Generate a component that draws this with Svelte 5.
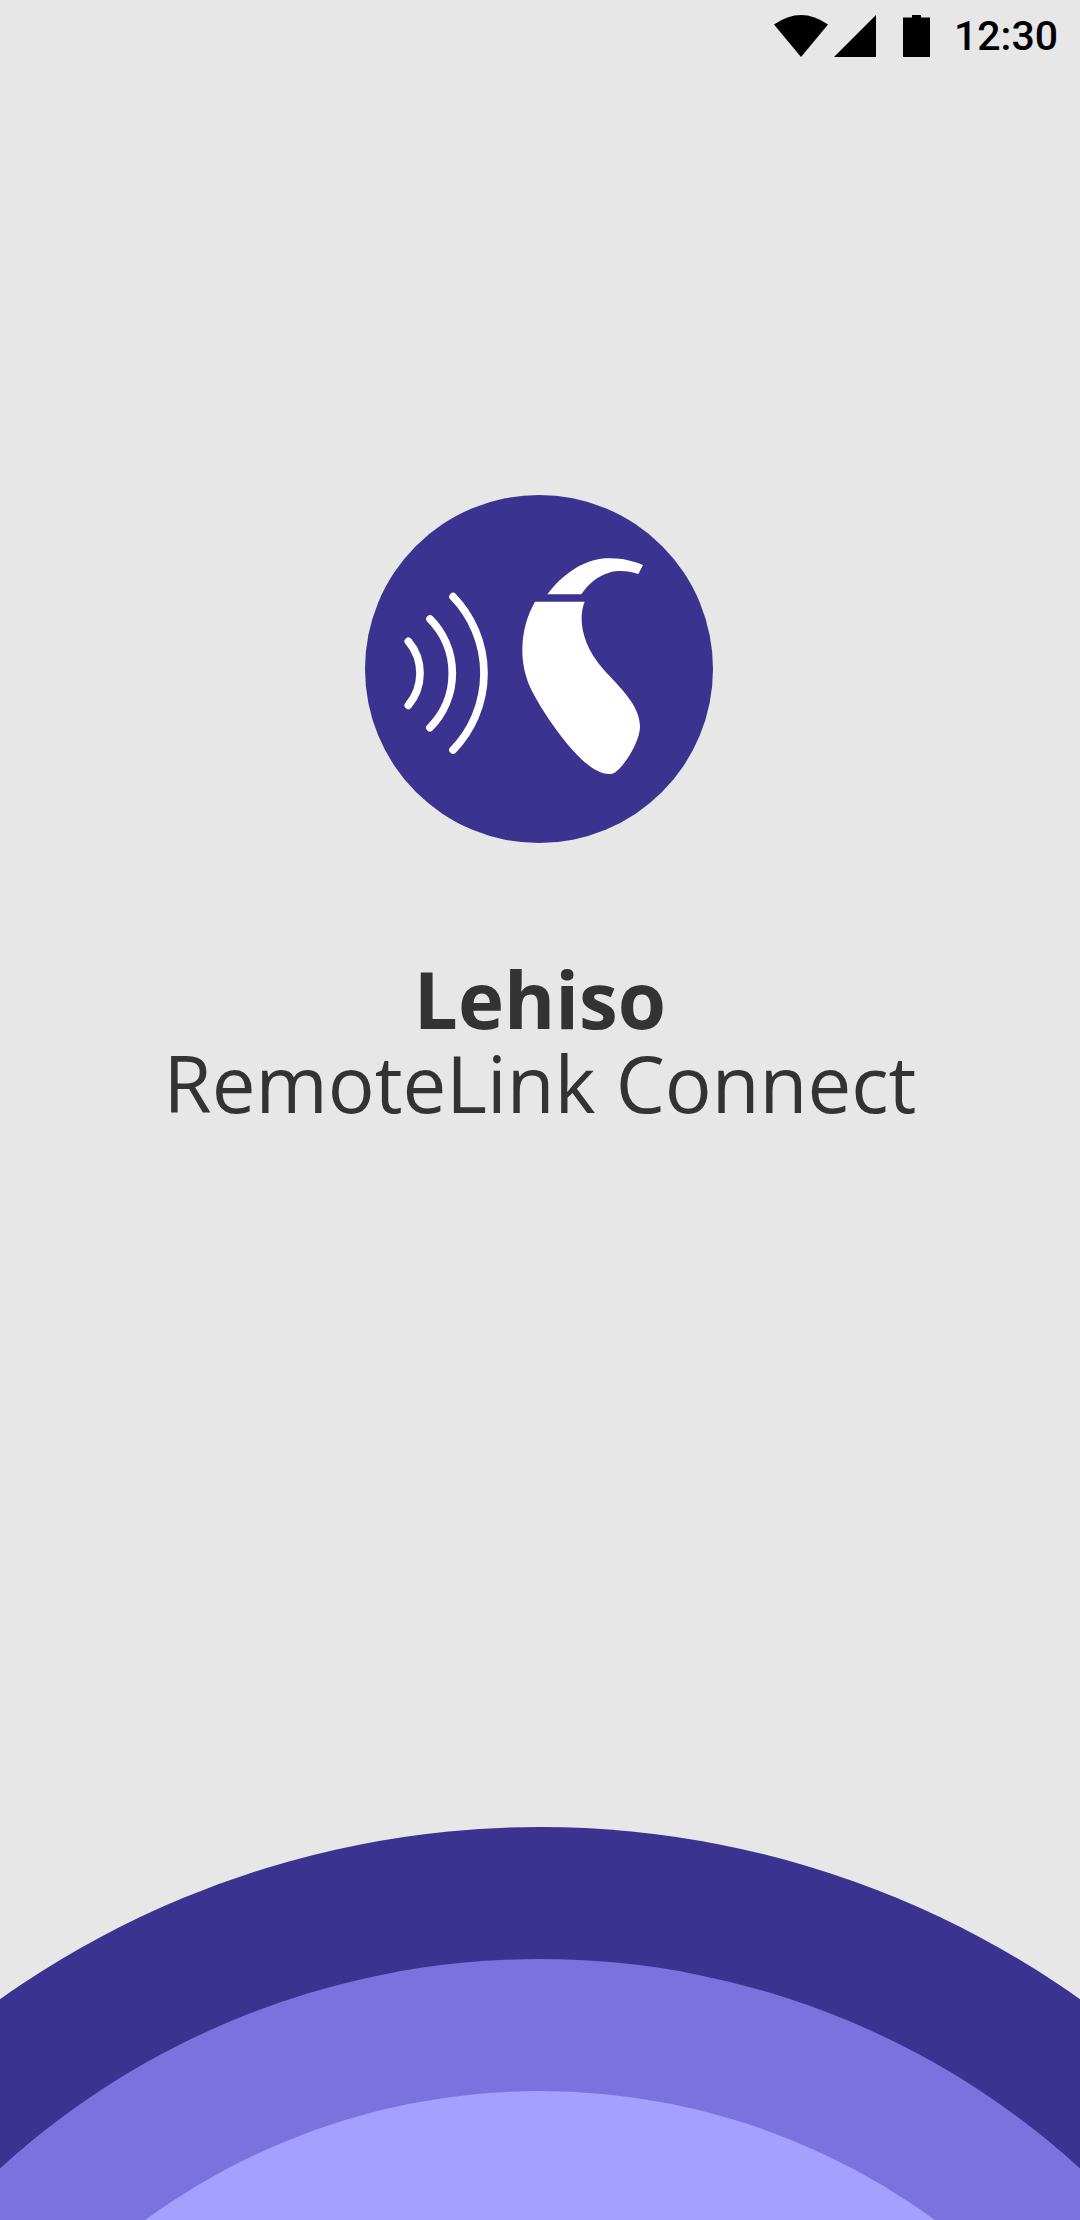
<script lang="ts">
  const appName = 'Lehiso'
  const appSubtitle = 'RemoteLink Connect'
  const waves = [
    'M203 514 A149 149 0 0 1 203 706',
    'M268 447 A232 232 0 0 1 268 773',
    'M337 380 A331 331 0 0 1 337 840'
  ]
  // concentric rings, centre sits below the fold
  const rings = [
    { r: 933, fill: '#3c3391' },
    { r: 801, fill: '#7b72de' },
    { r: 669, fill: '#a59fff' }
  ]
</script>

<div class="screen">
  <header class="status-bar">
    <svg class="wifi" viewBox="0 0 54 42" aria-hidden="true">
      <path d="M0 9.5 Q27 -9.5 54 9.5 L27 42 Z" />
    </svg>
    <svg class="signal" viewBox="0 0 42 42" aria-hidden="true">
      <path d="M0 42 L42 0 V42 Z" />
    </svg>
    <svg class="battery" viewBox="0 0 27 42" aria-hidden="true">
      <path d="M0 2.5 H9 V0 H18 V2.5 H27 V42 H0 Z" />
    </svg>
    <span class="clock">12:30</span>
  </header>

  <main class="splash">
    <svg class="logo" viewBox="73 75 1044 1044" aria-label="Hearing aid">
      <circle cx="595" cy="597" r="522" fill="#3c3391" />
      <g fill="none" stroke="#fff" stroke-width="23" stroke-linecap="round">
        {#each waves as d}
          <path {d} />
        {/each}
      </g>
      <path
        fill="#fff"
        d="M620 373 C665 315 725 268 800 265 C840 263 875 272 907 285 L893 312 C865 303 835 300 805 308 C770 318 740 345 722 373 Z"
      />
      <path
        fill="#fff"
        d="M583 395 H732 C712 445 722 525 790 600 C835 650 898 705 898 770 C898 815 850 890 822 908 C810 915 790 912 770 902 C715 878 625 760 575 665 C555 625 545 585 545 540 C545 485 560 435 583 395 Z"
      />
    </svg>

    <h1 class="title">
      <strong>{appName}</strong>
      <span>{appSubtitle}</span>
    </h1>
  </main>

  <svg class="rings" viewBox="0 1827 1080 393" aria-hidden="true">
    {#each rings as ring}
      <circle cx="540" cy="2760" r={ring.r} fill={ring.fill} />
    {/each}
  </svg>
</div>

<style>
  :global(body) {
    margin: 0;
    background: #e7e7e7;
  }
  .screen {
    display: flex;
    flex-direction: column;
    width: 1080px;
    height: 2220px;
    overflow: hidden;
    background: #e7e7e7;
  }
  .status-bar {
    display: flex;
    align-items: center;
    justify-content: flex-end;
    height: 72px;
    padding-right: 22px;
  }
  .status-bar svg {
    display: block;
    height: 42px;
    fill: #000;
  }
  .wifi {
    width: 54px;
  }
  .signal {
    width: 42px;
    margin-left: 6px;
  }
  .battery {
    width: 27px;
    margin-left: 27px;
  }
  .clock {
    margin-left: 24px;
    font-family: Roboto, sans-serif;
    font-size: 41px;
    font-weight: 500;
    line-height: 72px;
    color: #000;
  }
  .splash {
    display: flex;
    flex-direction: column;
    align-items: center;
    padding-top: 423px;
  }
  .logo {
    display: block;
    width: 348px;
    height: 348px;
    margin-right: 3px;
  }
  .title {
    display: flex;
    flex-direction: column;
    align-items: center;
    margin: 114px 0 0;
    font-family: "Open Sans", sans-serif;
    font-size: 78px;
    line-height: 84px;
    font-weight: 400;
    color: #333;
  }
  .title strong {
    font-weight: 700;
  }
  .rings {
    display: block;
    width: 1080px;
    height: 393px;
    margin-top: auto;
  }
</style>
